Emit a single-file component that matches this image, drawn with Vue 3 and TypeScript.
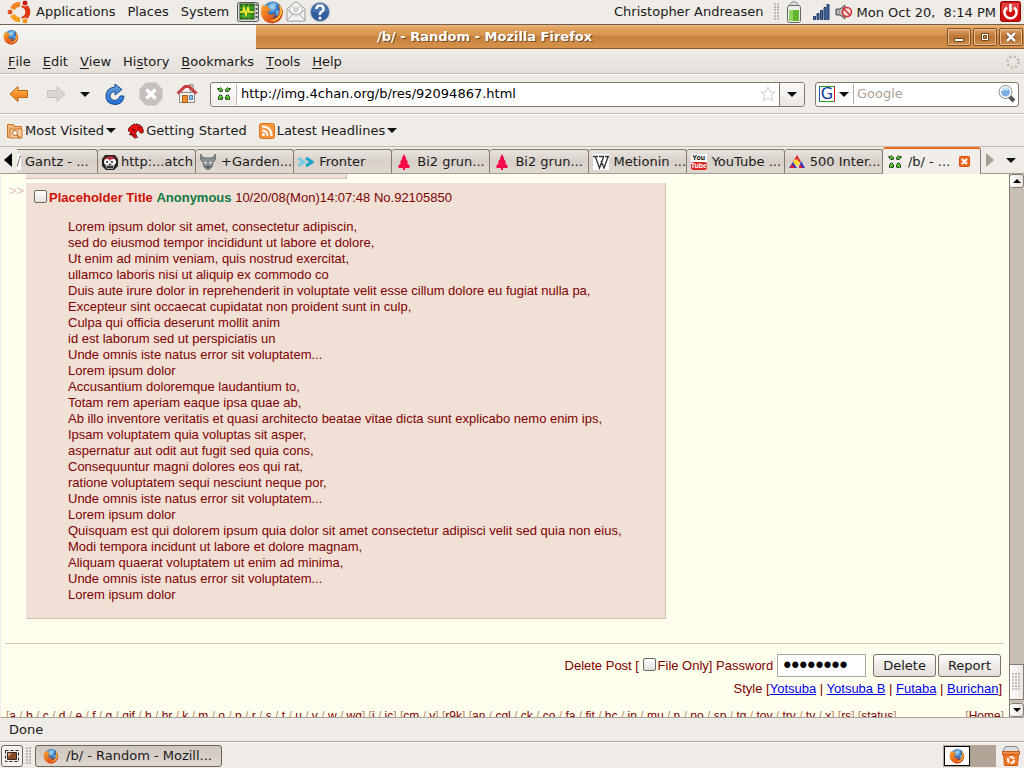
<script setup lang="ts">
import { ref } from 'vue'

interface Tab { icon: string; label: string }

const menus = ['File', 'Edit', 'View', 'History', 'Bookmarks', 'Tools', 'Help'].map((name, i) => {
  const at = i === 3 ? 2 : 0
  return { before: name.slice(0, at), key: name[at], after: name.slice(at + 1) }
})

const tabs: Tab[] = [
  { icon: 'cut', label: 'Gantz - ...' },
  { icon: 'face', label: 'http:...atch' },
  { icon: 'demon', label: '+Garden...' },
  { icon: 'arrows', label: 'Fronter' },
  { icon: 'tree', label: 'Bi2 grun...' },
  { icon: 'tree', label: 'Bi2 grun...' },
  { icon: 'wiki', label: 'Metionin ...' },
  { icon: 'tube', label: 'YouTube ...' },
  { icon: 'triangle', label: '500 Inter...' },
]

const postLines = [
  'Lorem ipsum dolor sit amet, consectetur adipiscin,',
  'sed do eiusmod tempor incididunt ut labore et dolore,',
  'Ut enim ad minim veniam, quis nostrud exercitat,',
  'ullamco laboris nisi ut aliquip ex commodo co',
  'Duis aute irure dolor in reprehenderit in voluptate velit esse cillum dolore eu fugiat nulla pa,',
  'Excepteur sint occaecat cupidatat non proident sunt in culp,',
  'Culpa qui officia deserunt mollit anim',
  'id est laborum sed ut perspiciatis un',
  'Unde omnis iste natus error sit voluptatem...',
  'Lorem ipsum dolor',
  'Accusantium doloremque laudantium to,',
  'Totam rem aperiam eaque ipsa quae ab,',
  'Ab illo inventore veritatis et quasi architecto beatae vitae dicta sunt explicabo nemo enim ips,',
  'Ipsam voluptatem quia voluptas sit asper,',
  'aspernatur aut odit aut fugit sed quia cons,',
  'Consequuntur magni dolores eos qui rat,',
  'ratione voluptatem sequi nesciunt neque por,',
  'Unde omnis iste natus error sit voluptatem...',
  'Lorem ipsum dolor',
  'Quisquam est qui dolorem ipsum quia dolor sit amet consectetur adipisci velit sed quia non eius,',
  'Modi tempora incidunt ut labore et dolore magnam,',
  'Aliquam quaerat voluptatem ut enim ad minima,',
  'Unde omnis iste natus error sit voluptatem...',
  'Lorem ipsum dolor',
]

const styles = ['Yotsuba', 'Yotsuba B', 'Futaba', 'Burichan']
const boards = [
  'a b c d e f g gif h hr k m o p r s t u v w wg',
  'i ic',
  'cm y',
  'r9k',
  'an cgl ck co fa fit hc jp mu n po sp tg toy trv tv x',
  'rs',
  'status',
].map((group) => group.split(' '))

const url = ref('http://img.4chan.org/b/res/92094867.html')
const search = ref('')
const password = ref('password')
const fileOnly = ref(false)
const selected = ref(false)
</script>

<template>
  <div class="desktop">
    <svg class="defs" aria-hidden="true">
      <defs>
        <radialGradient id="globe" cx=".45" cy=".3" r=".7"><stop offset="0" stop-color="#8fd0f5" /><stop offset=".5" stop-color="#2c72bd" /><stop offset="1" stop-color="#10295f" /></radialGradient>
        <linearGradient id="fire" x1="0" y1="0" x2="1" y2="1"><stop offset="0" stop-color="#f9b234" /><stop offset=".5" stop-color="#e9661c" /><stop offset="1" stop-color="#c72c10" /></linearGradient>
        <linearGradient id="orange" x1="0" y1="0" x2="0" y2="1"><stop offset="0" stop-color="#ffc078" /><stop offset=".5" stop-color="#f9922b" /><stop offset="1" stop-color="#e8760c" /></linearGradient>
        <linearGradient id="blue" x1="0" y1="0" x2="0" y2="1"><stop offset="0" stop-color="#6fa0d5" /><stop offset="1" stop-color="#1f6fe0" /></linearGradient>
      </defs>
      <symbol id="firefox" viewBox="0 0 24 24">
        <circle cx="12.500" cy="11" r="9.500" fill="url(#globe)" />
        <path d="M11 4q3-2 6 0l-2 2 1 2-3 2-3-2zM16 11l4-1-1 5-3 1z" fill="#a7d9f2" opacity=".6" />
        <path d="M3 3.500Q3 6 4.500 6.500Q6 4.500 9 5Q7.500 6.500 8 8l3 1q0 1-3 2.500Q7.500 14 10 14.500Q12.500 15.500 15 13.500Q15 16.500 12 17.500Q18 18.500 19.500 12Q20 8 18 4Q22.500 7 23 12Q22.500 22 12.500 23.500Q3 23 1 14Q0.500 8 3 3.500Z" fill="url(#fire)" />
        <path d="M19.500 5Q24 11 20 17Q17 22 10 21Q20 19 20.500 11Z" fill="#fbd542" />
      </symbol>
      <symbol id="clover" viewBox="0 0 16 16">
        <g fill="#4fbe2e" stroke="#0b2405" stroke-width="1" stroke-dasharray="2 1">
          <path d="M1.500 2.500h2l1-1 2 2v2h-3z" /><path d="M14.500 2.500h-2l-1-1-2 2v2h3z" />
          <path d="M2.500 13.500v-3l2-2 2 2v3z" /><path d="M13.500 13.500v-3l-2-2-2 2v3z" />
        </g>
      </symbol>
    </svg>

    <header class="panel">
      <svg class="ubuntu" viewBox="0 0 24 24" width="24" height="24">
        <g fill="none" stroke-width="5"><path d="M5.500 9A7.500 7.500 0 0 1 13 4.500" stroke="#f58220" /><path d="M15 4.700A7.500 7.500 0 0 1 15 19.300" stroke="#dd3811" /><path d="M5.500 15A7.500 7.500 0 0 0 13 19.500" stroke="#f7a01d" /></g>
        <g stroke="#efebe7" stroke-width="1"><circle cx="3" cy="12" r="3" fill="#e95420" /><circle cx="18" cy="3" r="3" fill="#c81b13" /><circle cx="18" cy="21" r="3" fill="#f6971e" /></g>
      </svg>
      <button class="plain">Applications</button>
      <button class="plain">Places</button>
      <button class="plain">System</button>
      <div class="launchers">
        <svg viewBox="0 0 24 24" width="24" height="24"><rect x="1.500" y="2.500" width="21" height="19" rx="2" fill="#d8dad6" stroke="#555753" /><rect x="4" y="4" width="14" height="15" fill="#2e8a15" stroke="#244a1b" /><path d="M4 8h14M4 12h14M4 16h14M8 4v15M13 4v15" stroke="#58ab37" /><path d="M4 12h3l1-4 2 7 2-8 1 5h5" fill="none" stroke="#fcee3a" stroke-width="1.500" /><path d="M20.500 4v16" stroke="#555" stroke-width="2" stroke-dasharray="2 2" /></svg>
        <svg width="24" height="24"><use href="#firefox" /></svg>
        <svg viewBox="0 0 24 24" width="24" height="24"><path d="M3 9l8-7h2l8 7v12H3z" fill="#f4f4f2" stroke="#9b9c99" /><path d="M6 7h12v6l-6 3-6-3z" fill="#fff" stroke="#c5c6c2" /><path d="M3 20l6-6h6l6 6M9 14L4 10M15 14l5-4M9 9h6M9 11h5" fill="none" stroke="#a6a7a4" /></svg>
        <svg viewBox="0 0 24 24" width="24" height="24"><circle cx="12" cy="12" r="9.500" fill="#305f9f" stroke="#a5b5c9" /><path d="M4 12a8 8 0 0 1 16 0z" fill="#6188bd" opacity=".5" /><path d="M8.500 9q0-3.500 3.500-3.500T15.500 9q0 1.800-2 2.800T12 15" fill="none" stroke="#fff" stroke-width="2.500" /><circle cx="12" cy="18" r="1.600" fill="#fff" /></svg>
      </div>
      <div class="tray">
        <button class="plain">Christopher Andreasen</button>
        <span class="grip"></span>
        <svg class="battery" viewBox="0 0 16 22" width="16" height="22"><path d="M4 3l2-2h4l2 2v2H4z" fill="#ddd" stroke="#888" /><rect x="1.500" y="4.500" width="13" height="17" rx="2" fill="#eee" stroke="#666" /><path d="M3 9h10v11H3z" fill="#60b52c" /><path d="M3 9h4v11H3z" fill="#8ed35d" /></svg>
        <svg class="signal" viewBox="0 0 18 18" width="18" height="18"><g fill="#5478b2" stroke="#1d3764"><path d="M1.500 13.500h2v3h-2zM5 10.500h2v6H5zM8.500 7.500h2v9h-2zM12 4.500h2v12h-2zM15 1.500h2v15h-2z" /></g></svg>
        <svg class="speaker" viewBox="0 0 18 16" width="18" height="16"><path d="M1 5h4l5-4v14l-5-4H1z" fill="#999" stroke="#555" /><path d="M3 6v4M6 5v6" stroke="#ddd" /><circle cx="12" cy="8" r="4.500" fill="#fae2e2" stroke="#d52828" stroke-width="1.500" /><path d="M9 5l6 6" stroke="#d52828" stroke-width="1.500" /></svg>
        <span class="clock">Mon Oct 20,&nbsp; 8:14 PM</span>
        <svg class="power" viewBox="0 0 22 22" width="22" height="22"><rect x=".5" y=".5" width="20" height="20" rx="2" fill="#d30d0d" stroke="#8e0909" /><path d="M2 2h17v8Q10 8 2 12z" fill="#f06767" opacity=".6" /><path d="M7 6.500a6 6 0 1 0 7 0" fill="none" stroke="#fff" stroke-width="2.500" /><path d="M10.500 3v8" stroke="#fff" stroke-width="2.500" /></svg>
      </div>
    </header>

    <div class="titlebar">
      <div class="blank"><svg width="16" height="16"><use href="#firefox" /></svg></div>
      <h1>/b/ - Random - Mozilla Firefox</h1>
      <div class="winbtns">
        <button aria-label="Minimize"><svg viewBox="0 0 12 12" width="12" height="12"><path d="M1.500 7.500h9v3h-9z" fill="#fff" stroke="#744519" /></svg></button>
        <button aria-label="Maximize"><svg viewBox="0 0 12 12" width="12" height="12"><path d="M2.500 2.500h7v7h-7z" fill="#fff" stroke="#744519" /><path d="M4.500 4.500h3v3h-3z" fill="#c88444" stroke="#744519" /></svg></button>
        <button aria-label="Close"><svg viewBox="0 0 12 12" width="12" height="12"><path d="M2 2l8 8M10 2l-8 8" stroke="#744519" stroke-width="4" /><path d="M2 2l8 8M10 2l-8 8" stroke="#fff" stroke-width="2.500" /></svg></button>
      </div>
    </div>

    <nav class="menubar">
      <button v-for="m in menus" :key="m.after" class="plain">{{ m.before }}<u>{{ m.key }}</u>{{ m.after }}</button>
      <svg class="throbber" viewBox="0 0 14 14" width="14" height="14"><circle cx="7" cy="7" r="5.500" fill="none" stroke="#bbb6b0" stroke-width="2.500" stroke-dasharray="2 2.320" /></svg>
    </nav>

    <div class="toolbar">
      <button class="icon" aria-label="Back"><svg viewBox="0 0 20 20" width="20" height="20"><path d="M1 10l8-7.500v4h9.500v7H9v4z" fill="url(#orange)" stroke="#bd650d" /></svg></button>
      <button class="icon forward" aria-label="Forward"><svg viewBox="0 0 20 20" width="20" height="20"><path d="M19 10l-8-7.500v4H1.500v7H11v4z" fill="#d9d5d0" stroke="#c5c0ba" /></svg></button>
      <button class="icon" aria-label="Recent pages"><i class="caret"></i></button>
      <button class="icon reload" aria-label="Reload"><svg viewBox="0 0 22 24" width="22" height="24"><path d="M11 2l7 5.500-7 5.500V9.500Q6 10 6 14.500Q6.500 18.500 11 18.500Q15 18 16 14h4Q19 22.500 11 22.500Q2 22 2 14Q2 6 11 5z" fill="url(#blue)" stroke="#1b4a8c" /></svg></button>
      <button class="icon" aria-label="Stop"><svg viewBox="0 0 24 24" width="24" height="24"><path d="M7 .5h10L23.500 7v10L17 23.500H7L.5 17V7z" fill="#c6bfbb" /><path d="M7.500 7.500l9 9M16.500 7.500l-9 9" stroke="#fff" stroke-width="3.500" /></svg></button>
      <button class="icon home" aria-label="Home"><svg viewBox="0 0 22 22" width="22" height="22"><path d="M14 1.500h3V8h-3z" fill="#ddd" stroke="#888" /><path d="M3.500 9.500h15v10h-15z" fill="#f5f3f0" stroke="#8b8883" /><path d="M1.500 10.500L9 3.500h4l7.500 7" fill="none" stroke="#ca4040" stroke-width="3" /><path d="M6.500 12.500h5v7h-5z" fill="#ed8e32" stroke="#ab5c13" /><path d="M13.500 12.500h3v4h-3z" fill="#8dcdf0" stroke="#467ca5" /></svg></button>
      <div class="urlbar">
        <span class="favicon"><svg width="16" height="16"><use href="#clover" /></svg></span>
        <input v-model="url" aria-label="Location">
        <svg class="star" viewBox="0 0 16 16" width="16" height="16"><path d="M8 1l2 5h5l-4 3 2 6-5-3-5 3 2-6-4-3h5z" fill="#fff" stroke="#d0cfcd" /></svg>
        <button aria-label="History list"><i class="caret"></i></button>
      </div>
      <div class="search">
        <button aria-label="Search engine"><span class="goog">G</span><i class="caret"></i></button>
        <input v-model="search" placeholder="Google" aria-label="Search">
        <svg viewBox="0 0 18 18" width="18" height="18"><path d="M11 11l5 5" stroke="#555" stroke-width="4" /><circle cx="7.500" cy="7" r="5.500" fill="#7caee4" stroke="#fff" stroke-width="2" /><circle cx="7.500" cy="7" r="6.500" fill="none" stroke="#888" /><path d="M4 6q3-4 6-1" stroke="#d3e7fa" stroke-width="2" fill="none" /></svg>
      </div>
    </div>

    <div class="bookmarks">
      <button class="plain"><svg viewBox="0 0 16 16" width="16" height="16"><path d="M.5 1.500h6l1 2h7v11H.5z" fill="#f1b77c" stroke="#ca731f" /><path d="M3 6h12v9H3z" fill="#f6cfa6" stroke="#ce772a" /><circle cx="8" cy="10" r="2.500" fill="#fff" stroke="#ba6520" /><path d="M10 12l3 3" stroke="#ba6520" stroke-width="1.500" /></svg>Most Visited<i class="caret"></i></button>
      <button class="plain"><svg viewBox="0 0 16 16" width="16" height="16"><path d="M.5 5.500l3-3 3-1.500 5 .5 3 3 1 4.500-2.500 1.500-2.500-3-2 1-1 2 2 4-3 .5-3-3-2-.5 1-2-2.500-2z" fill="#ed1111" stroke="#230000" stroke-dasharray="2 1" /><path d="M10 4l2 1M4 6l3 2M3 10l3 3" stroke="#350000" /></svg>Getting Started</button>
      <button class="plain"><svg viewBox="0 0 16 16" width="16" height="16"><rect x=".5" y=".5" width="15" height="15" rx="2" fill="#f8943b" stroke="#d97721" /><g fill="none" stroke="#fff" stroke-width="2"><path d="M3 7.500q5.500 0 5.500 5.500M3 3.500q9.500 0 9.500 9.500" /></g><circle cx="4.500" cy="11.500" r="1.500" fill="#fff" /></svg>Latest Headlines<i class="caret"></i></button>
    </div>

    <div class="tabs" role="tablist">
      <button class="scroll left" aria-label="Scroll left"><i></i></button>
      <button v-for="(t, i) in tabs" :key="i" class="tab" :class="t.icon" role="tab">
        <svg v-if="t.icon === 'cut'" viewBox="0 0 4 16" width="4" height="16"><path d="M0 0h4v16H0z" fill="#fff" /><path d="M0 13L3 2h1" fill="none" stroke="#777" /></svg>
        <svg v-else-if="t.icon === 'face'" viewBox="0 0 16 16" width="16" height="16"><path d="M3 1h10l3 4v7l-4 4H4l-4-4V5z" fill="#222" /><path d="M3 4q4-3 9-1l2 3H2z" fill="#bd3240" /><path d="M3 11h10l-2 4H5z" fill="#a7a5a5" /><circle cx="5" cy="8" r="3" fill="#fff" /><circle cx="11" cy="8" r="3" fill="#fff" /><path d="M5 7v2M10 7v2M5 13h6" stroke="#111" stroke-width="1.500" /></svg>
        <svg v-else-if="t.icon === 'demon'" viewBox="0 0 16 16" width="16" height="16"><path d="M1 0q0 4 4 4h6q4 0 4-4 2 6-2 8l-1 5-4 3-4-3-1-5Q-1 6 1 0z" fill="#8b8f90" stroke="#666a6b" /><path d="M4 7l3 2-2 1zM12 7L9 9l2 1z" fill="#fff" /><path d="M5 12h6l-3 2z" fill="#444" /></svg>
        <svg v-else-if="t.icon === 'arrows'" viewBox="0 0 16 16" width="16" height="16"><path d="M0 4l6 4-6 4" fill="none" stroke="#79cde2" stroke-width="3" /><path d="M8 4l6 4-6 4" fill="none" stroke="#16a1c8" stroke-width="3" /></svg>
        <svg v-else-if="t.icon === 'tree'" viewBox="0 0 16 16" width="16" height="16"><path d="M8 0l2 4v1l2 3-1 1 3 3-1 1 1 1h-5v2H7v-2H2l1-1-1-1 3-3-1-1 2-3V4z" fill="#f50b47" /></svg>
        <svg v-else-if="t.icon === 'wiki'" viewBox="0 0 16 16" width="16" height="16"><path d="M0 0h16v16H0z" fill="#fff" /><path d="M0 2.500h5M6 2.500h5M12 2.500h4M2.500 3l4 11 4-11M8 7l3 7 4-11" fill="none" stroke="#333" stroke-width="1.300" /></svg>
        <span v-else-if="t.icon === 'tube'" class="yt"><b>You</b><em>Tube</em></span>
        <svg v-else viewBox="0 0 16 16" width="16" height="16"><path d="M8 1l4 7H4z" fill="#e61a2b" /><path d="M5 6l3-1 3 4-3 3-4-2z" fill="#ffd83a" /><path d="M4 8l4 6H0zM12 7l4 7h-6z" fill="#2b32ce" /><path d="M3 10l3 4H1zM11 10l3 4h-4z" fill="#e61a2b" /></svg>
        <span>{{ t.label }}</span>
      </button>
      <div class="tab active" role="tab" aria-selected="true">
        <svg width="16" height="16"><use href="#clover" /></svg><span>/b/ - ...</span>
        <button aria-label="Close tab"><svg viewBox="0 0 11 11" width="11" height="11"><rect x=".5" y=".5" width="10" height="10" rx="1" fill="#ed6c24" stroke="#dd4b0b" /><path d="M3 3l5 5M8 3L3 8" stroke="#fff" stroke-width="2" /></svg></button>
      </div>
      <button class="scroll right" aria-label="Scroll right"><i></i></button>
      <button class="scroll all" aria-label="All tabs"><i class="caret"></i></button>
    </div>

    <div class="view">
      <main>
        <div class="previous"></div>
        <div class="thread">
          <span class="marker">&gt;&gt;</span>
          <article>
            <label class="posthead"><input v-model="selected" type="checkbox"><b class="subject">Placeholder Title</b> <b class="name">Anonymous</b> 10/20/08(Mon)14:07:48 No.92105850</label>
            <p><template v-for="(line, i) in postLines" :key="i">{{ line }}<br></template></p>
          </article>
        </div>
        <hr>
        <form class="delete" @submit.prevent>
          <span>Delete Post [&nbsp;</span><label><input v-model="fileOnly" type="checkbox">File Only</label><span>]&nbsp;</span>
          <label for="pw">Password</label><input id="pw" v-model="password" type="password">
          <button>Delete</button><button>Report</button>
        </form>
        <div class="styles">Style [<template v-for="(s, i) in styles" :key="s"><template v-if="i"> | </template><a href="#">{{ s }}</a></template>]</div>
        <footer>
          <div><template v-for="(g, i) in boards" :key="i">[<template v-for="(b, j) in g" :key="b"><template v-if="j"> / </template><a href="#">{{ b }}</a></template>] </template></div>
          <div>[<a href="#">Home</a>]</div>
        </footer>
      </main>
      <div class="scrollbar">
        <button aria-label="Scroll up"><i class="up"></i></button>
        <div class="track"><div class="thumb"><span></span></div></div>
        <button aria-label="Scroll down"><i class="down"></i></button>
      </div>
    </div>

    <div class="status">Done</div>

    <div class="taskbar">
      <button class="show" aria-label="Show desktop"><svg viewBox="0 0 14 12" width="14" height="12"><path d="M.5.5h13v11H.5z" fill="#f2eeea" stroke="#222" stroke-dasharray="3 2" /><path d="M2.500 2.500h9v7h-9z" fill="#874a2c" stroke="#39251a" /><path d="M3 3h4l-4 4z" fill="#d19a75" /></svg></button>
      <span class="grip"></span>
      <button class="task"><svg width="16" height="16"><use href="#firefox" /></svg>/b/ - Random - Mozill...</button>
      <div class="pager"><div><svg width="16" height="16"><use href="#firefox" /></svg></div><div></div></div>
      <svg class="trash" viewBox="0 0 20 22" width="20" height="22"><path d="M4.500 1.500h11l3 5h-17z" fill="#ddd" stroke="#888" /><path d="M1.500 6.500h17v3h-17z" fill="#f28d49" stroke="#c05d1c" /><path d="M2.500 9.500h15l-1 11h-13z" fill="#ee7726" stroke="#cc5a15" /><circle cx="10" cy="15" r="3" fill="none" stroke="#fff" stroke-width="2" stroke-dasharray="5 1.300" /></svg>
    </div>
  </div>
</template>

<style>
html, body { margin: 0; overflow: hidden; }
</style>

<style scoped>
* { box-sizing: border-box; }
.desktop { display: flex; flex-direction: column; height: 100vh; background: #efebe7; color: #1a1a1a; font: 13px/16px "DejaVu Sans", sans-serif; overflow: hidden; }
.defs { position: absolute; width: 0; height: 0; }
svg { flex: none; display: block; }
button { font: inherit; color: inherit; padding: 0; margin: 0; border: 0; background: none; white-space: nowrap; flex: none; }
input { font: inherit; min-width: 0; margin: 0; }
.plain { display: flex; align-items: center; }
.caret { display: block; width: 10px; border: 5px solid transparent; border-top-color: #111; border-bottom: 0; }
.grip { width: 6px; height: 18px; background: radial-gradient(circle at 1px 1px, #bdb6ae 1px, transparent 1px) 0 0 / 3px 3px; }

.panel { display: flex; align-items: center; height: 25px; flex: none; padding: 0 2px 1px 7px; border-bottom: 1px solid #6e6152; }
.ubuntu + .plain { margin-left: 5px; }
.panel > .plain + .plain { margin-left: 12px; }
.launchers { display: flex; margin-left: 7px; }
.tray { display: flex; align-items: center; margin-left: auto; }
.tray .grip { margin-left: 10px; }
.battery { margin-left: 6px; }
.signal { margin-left: 10px; }
.speaker { margin-left: 5px; }
.clock { margin-left: 4px; padding-top: 2px; }
.power { margin-left: 4px; }

.titlebar { display: flex; align-items: center; height: 24px; flex: none; background: linear-gradient(#efb878 0, #e0a160 15%, #d7954f 45%, #c57f39 50%, #d48f4b 90%); border-bottom: 1px solid #83552b; }
.blank { width: 25%; height: 24px; align-self: flex-start; padding: 4px 3px; background: linear-gradient(#f7f6f3, #efebe7); }
h1 { flex: 1; margin: 0 0 0 121px; font: bold 13px/20px "DejaVu Sans", sans-serif; color: #fff; text-shadow: 1px 1px #74481f; white-space: nowrap; }
.winbtns { display: flex; gap: 2px; padding-right: 1px; }
.winbtns button { display: grid; place-items: center; width: 24px; height: 18px; border: 1px solid #7e5025; border-radius: 2px; background: linear-gradient(#dea569, #ba7332 50%, #ce8b4c); box-shadow: inset 0 0 0 1px #e9bd8f; }

.menubar { display: flex; align-items: center; gap: 12px; height: 25px; flex: none; padding: 1px 4px 0 8px; border-bottom: 1px solid #c6beb6; background: linear-gradient(#efebe7, #e5dfd9); }
.throbber { margin-left: auto; }
u { text-underline-offset: 2px; }

.toolbar { display: flex; align-items: center; height: 40px; flex: none; padding: 0 5px 0 9px; border-bottom: 1px solid #c6beb6; border-top: 1px solid #fff; }
.icon { display: block; }
.forward { margin: 0 14px 0 17px; }
.reload { margin: 0 13px 0 14px; }
.home { margin: 0 12px 0 13px; }
.urlbar, .search { display: flex; align-items: center; height: 25px; border: 1px solid #83796c; border-radius: 3px; background: #fff; overflow: hidden; }
.urlbar { flex: 1; min-width: 0; }
.urlbar input, .search input { flex: 1; border: 0; outline: 0; padding: 0 4px; background: none; color: #000; }
.favicon { display: grid; place-items: center; width: 26px; height: 21px; border-right: 1px solid #c1b7ac; background: linear-gradient(#fff, #efebe7); }
.star { margin-right: 3px; }
.urlbar button { display: grid; place-items: center; width: 25px; height: 25px; border-left: 1px solid #83796c; background: linear-gradient(#fcfbfa, #e9e4df); }
.search { width: 204px; margin-left: 10px; padding: 0 2px 0 3px; }
.search button { display: flex; align-items: center; gap: 4px; padding-right: 4px; height: 20px; border-right: 1px solid #b5aca2; }
.search input { padding: 0 3px; }
.goog { width: 16px; height: 16px; border: 1px solid #29a329; border-right-color: #d01616; border-left-color: #1b50c4; color: #123a9c; line-height: 14px; font-size: 16px; }
.search input::placeholder { color: #aca297; opacity: 1; }

.bookmarks { display: flex; align-items: center; gap: 12px; height: 33px; flex: none; padding: 0 7px; border-top: 1px solid #fff; border-bottom: 1px solid #c8b9ac; }
.bookmarks svg { margin-right: 2px; }
.bookmarks .caret { margin-left: 2px; }

.tabs { display: flex; align-items: flex-end; height: 27px; flex: none; border-bottom: 1px solid #a79c91; }
.tab { display: flex; align-items: center; flex: 1 1 0; min-width: 0; height: 24px; padding: 0 0 0 4px; gap: 5px; border: 1px solid #85786c; border-bottom: 0; border-radius: 3px 3px 0 0; border-left: 0; background: linear-gradient(#e9e4df, #d8d0c9 50%, #e0d9d2); overflow: hidden; }
.tab.cut { flex: 0 1 81px; padding-left: 0; gap: 4px; border-radius: 0 3px 0 0; }
.tab span { white-space: nowrap; }
.tab.face { gap: 3px; }
.tab.active { height: 27px; margin-bottom: -1px; border-top: 2px solid #ee6a1d; background: #f1eeea; }
.active button { margin: 0 10px 0 auto; }
.scroll { align-self: center; }
.scroll i { display: block; }
.left { width: 17px; padding-left: 4px; }
.left i { width: 8px; border: 7px solid transparent; border-right: 8px solid #000; border-left: 0; }
.right { width: 18px; padding-left: 5px; }
.right i { width: 8px; border: 7px solid transparent; border-left: 8px solid #aa9f94; border-right: 0; }
.all { width: 25px; padding-left: 7px; }
.yt { display: flex; flex-direction: column; flex: none; width: 16px; height: 16px; background: #fff; font: bold 7px/8px "Liberation Sans", sans-serif; text-align: center; color: #000; }
.yt em { background: #e02525; color: #fff; font-style: normal; border-radius: 2px; }

.view { display: flex; flex: 1; min-height: 0; border-left: 1px solid #efebe7; border-bottom: 1px solid #aaa39b; }
main { flex: 1; min-width: 0; overflow: hidden; background: #ffffee; color: #800000; font: 13px/16px "Liberation Sans", sans-serif; padding: 0 5px; }
.previous { width: 321px; height: 5px; margin-left: 20px; background: #f0e0d6; border: 1px solid #d9bfb7; border-width: 0 1px 1px 0; }
.thread { display: flex; margin-top: 4px; }
.marker { width: 20px; padding-left: 3px; color: #e0bfb7; }
article { width: 640px; background: #f0e0d6; border: 1px solid #d9bfb7; border-width: 0 1px 1px 0; padding: 7px 8px 2px; }
.posthead { display: block; white-space: pre; }
.subject { color: #cc1105; }
.name { color: #117743; }
input[type="checkbox"] { appearance: none; width: 13px; height: 13px; margin: 0 2px 0 0; vertical-align: -1px; border: 1px solid #6d6963; border-radius: 2px; background: linear-gradient(#fff, #e4e2df); }
article p { margin: 13px 34px; white-space: nowrap; }
hr { margin: 24px 0 0; border: 0; border-top: 1px solid #d0c3b6; }
.delete { display: flex; align-items: center; justify-content: flex-end; height: 37px; padding: 6px 3px 0; white-space: pre; }
#pw { width: 89px; height: 23px; margin: 0 7px 0 4px; border: 1px solid #a8a8a8; background: #fff; padding: 0 5px; font: 23px "Liberation Sans", sans-serif; color: #000; outline: 0; }
.delete button { height: 23px; padding: 0 9px; border: 1px solid #7a7067; border-radius: 3px; background: linear-gradient(#fff, #eeeae7 50%, #e5dfda); color: #1a1a1a; font: 13px/16px "DejaVu Sans", sans-serif; }
.delete button + button { margin-left: 2px; }
.styles { text-align: right; padding-right: 2px; }
.styles a { color: #0000ee; }
footer { display: flex; justify-content: space-between; margin-top: 11px; color: #bb8866; font-size: 12px; white-space: pre; }
footer a { color: #800000; text-decoration: none; }

.scrollbar { display: flex; flex-direction: column; width: 15px; border-left: 1px solid #857a70; }
.scrollbar button { height: 14px; display: grid; place-items: center; border: 1px solid #857a70; border-left: 0; border-radius: 3px; background: linear-gradient(90deg, #fff, #e7e2dd); }
.scrollbar i { border: 4px solid transparent; }
.scrollbar .up { border-bottom-color: #000; border-top: 0; }
.scrollbar .down { border-top-color: #000; border-bottom: 0; }
.track { display: flex; flex-direction: column; justify-content: flex-end; flex: 1; background: #c9beb4; padding-bottom: 3px; }
.thumb { display: grid; place-items: center; height: 36px; border: 1px solid #857a70; border-left: 0; background: linear-gradient(90deg, #fff, #ebe6e1); }
.thumb span { width: 9px; height: 18px; background: radial-gradient(circle at 1px 1px, #c6c0b9 1px, transparent 1px) 0 0 / 3px 3px; }

.status { height: 24px; flex: none; padding: 4px 9px; border-bottom: 1px solid #b6a597; }
.taskbar { display: flex; align-items: center; height: 26px; flex: none; padding: 0 3px 0 1px; border-top: 1px solid #fff; }
.show { display: grid; place-items: center; width: 22px; height: 22px; border: 1px solid #6e655b; border-radius: 3px; background: #f4f1ee; }
.taskbar .grip { margin: 0 3px 0 3px; }
.task { display: flex; align-items: center; gap: 7px; width: 187px; height: 22px; padding: 0 7px; border: 1px solid #6e655b; border-radius: 3px; background: linear-gradient(#cfc6be, #dfd8d1); }
.pager { display: flex; margin-left: auto; height: 22px; background: #b2a597; padding: 1px 0 1px 1px; }
.pager div { display: grid; place-items: center; width: 26px; height: 20px; }
.pager div:first-child { border: 1px solid #000; background: #fff; }
.trash { margin-left: 5px; }
</style>
